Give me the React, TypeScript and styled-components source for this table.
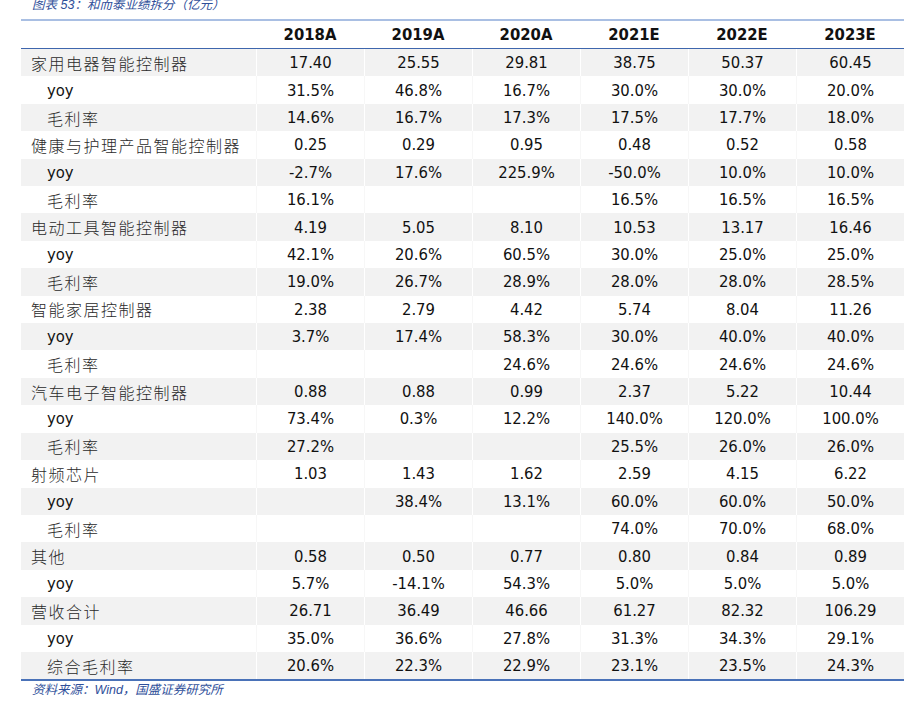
import React from 'react';
import styled, {createGlobalStyle} from "styled-components";

type Row = {
    label: string
    level: 'main' | 'sub'
    values: string[]
}

const years = ['2018A', '2019A', '2020A', '2021E', '2022E', '2023E']

const rows: Row[] = [
    {label: '家用电器智能控制器', level: 'main', values: ['17.40', '25.55', '29.81', '38.75', '50.37', '60.45']},
    {label: 'yoy', level: 'sub', values: ['31.5%', '46.8%', '16.7%', '30.0%', '30.0%', '20.0%']},
    {label: '毛利率', level: 'sub', values: ['14.6%', '16.7%', '17.3%', '17.5%', '17.7%', '18.0%']},
    {label: '健康与护理产品智能控制器', level: 'main', values: ['0.25', '0.29', '0.95', '0.48', '0.52', '0.58']},
    {label: 'yoy', level: 'sub', values: ['-2.7%', '17.6%', '225.9%', '-50.0%', '10.0%', '10.0%']},
    {label: '毛利率', level: 'sub', values: ['16.1%', '', '', '16.5%', '16.5%', '16.5%']},
    {label: '电动工具智能控制器', level: 'main', values: ['4.19', '5.05', '8.10', '10.53', '13.17', '16.46']},
    {label: 'yoy', level: 'sub', values: ['42.1%', '20.6%', '60.5%', '30.0%', '25.0%', '25.0%']},
    {label: '毛利率', level: 'sub', values: ['19.0%', '26.7%', '28.9%', '28.0%', '28.0%', '28.5%']},
    {label: '智能家居控制器', level: 'main', values: ['2.38', '2.79', '4.42', '5.74', '8.04', '11.26']},
    {label: 'yoy', level: 'sub', values: ['3.7%', '17.4%', '58.3%', '30.0%', '40.0%', '40.0%']},
    {label: '毛利率', level: 'sub', values: ['', '', '24.6%', '24.6%', '24.6%', '24.6%']},
    {label: '汽车电子智能控制器', level: 'main', values: ['0.88', '0.88', '0.99', '2.37', '5.22', '10.44']},
    {label: 'yoy', level: 'sub', values: ['73.4%', '0.3%', '12.2%', '140.0%', '120.0%', '100.0%']},
    {label: '毛利率', level: 'sub', values: ['27.2%', '', '', '25.5%', '26.0%', '26.0%']},
    {label: '射频芯片', level: 'main', values: ['1.03', '1.43', '1.62', '2.59', '4.15', '6.22']},
    {label: 'yoy', level: 'sub', values: ['', '38.4%', '13.1%', '60.0%', '60.0%', '50.0%']},
    {label: '毛利率', level: 'sub', values: ['', '', '', '74.0%', '70.0%', '68.0%']},
    {label: '其他', level: 'main', values: ['0.58', '0.50', '0.77', '0.80', '0.84', '0.89']},
    {label: 'yoy', level: 'sub', values: ['5.7%', '-14.1%', '54.3%', '5.0%', '5.0%', '5.0%']},
    {label: '营收合计', level: 'main', values: ['26.71', '36.49', '46.66', '61.27', '82.32', '106.29']},
    {label: 'yoy', level: 'sub', values: ['35.0%', '36.6%', '27.8%', '31.3%', '34.3%', '29.1%']},
    {label: '综合毛利率', level: 'sub', values: ['20.6%', '22.3%', '22.9%', '23.1%', '23.5%', '24.3%']},
]

const GlobalStyle = createGlobalStyle`
  html, body {
    margin: 0;
    padding: 0;
    background: #ffffff;
    overflow: hidden;
  }
`

export default function App() {
    return (
        <Page>
            <GlobalStyle/>
            <Caption>图表 53：和而泰业绩拆分（亿元）</Caption>
            <Table>
                <HeaderRow>
                    <HeadCell/>
                    {years.map(y => <HeadCell key={y}>{y}</HeadCell>)}
                </HeaderRow>
                {rows.map((r, i) => (
                    <DataRow key={i} $shaded={i % 2 === 0}>
                        <LabelCell $level={r.level} $latin={r.label === 'yoy'}>{r.label}</LabelCell>
                        {r.values.map((v, j) => <ValueCell key={j}>{v}</ValueCell>)}
                    </DataRow>
                ))}
            </Table>
            <Source>资料来源：Wind，国盛证券研究所</Source>
        </Page>
    );
}

const Page = styled.div`
  width: 912px;
  height: 710px;
  padding: 0 0 0 21px;
  box-sizing: border-box;
  overflow: hidden;
`

const Caption = styled.div`
  margin: -4px 0 0 11px;
  height: 23px;
  font-family: "Liberation Sans", "Noto Sans CJK SC", sans-serif;
  font-size: 12.5px;
  line-height: 18px;
  font-style: italic;
  color: #2f4f9a;
`

const Table = styled.div`
  width: 883px;
  border-top: 2px solid #a9bfe3;
  border-bottom: 2px solid #4a72b8;
`

const HeaderRow = styled.div`
  display: grid;
  grid-template-columns: 235px repeat(6, 108px);
  height: 27px;
  border-bottom: 1.5px solid #3e66ad;
`

const HeadCell = styled.div`
  display: flex;
  align-items: center;
  justify-content: center;
  font-family: "DejaVu Sans Condensed", "DejaVu Sans", sans-serif;
  font-weight: 700;
  font-size: 16.5px;
  color: #111111;
`

const DataRow = styled.div<{ $shaded: boolean }>`
  display: grid;
  grid-template-columns: 235px repeat(6, 108px);
  height: 27.42px;
  background: ${p => p.$shaded ? '#f2f2f2' : '#ffffff'};

  & > div + div {
    border-left: 1px solid ${p => p.$shaded ? '#ffffff' : '#f7f7f7'};
  }
`

const LabelCell = styled.div<{ $level: 'main' | 'sub', $latin: boolean }>`
  display: flex;
  align-items: center;
  padding-left: ${p => p.$level === 'main' ? '10px' : '26px'};
  font-family: "DejaVu Sans Condensed", "Noto Sans CJK SC", sans-serif;
  font-size: ${p => p.$latin ? '16.5px' : '16px'};
  font-weight: 300;
  letter-spacing: ${p => p.$latin ? '0' : '1.5px'};
  color: ${p => p.$latin ? '#111111' : '#2a2a2a'};
`

const ValueCell = styled.div`
  display: flex;
  align-items: center;
  justify-content: center;
  font-family: "DejaVu Sans Condensed", "DejaVu Sans", sans-serif;
  font-size: 16.5px;
  color: #111111;
`

const Source = styled.div`
  margin: 1px 0 0 11px;
  font-family: "Liberation Sans", "Noto Sans CJK SC", sans-serif;
  font-size: 12.5px;
  line-height: 16px;
  font-style: italic;
  color: #2f4f9a;
`
